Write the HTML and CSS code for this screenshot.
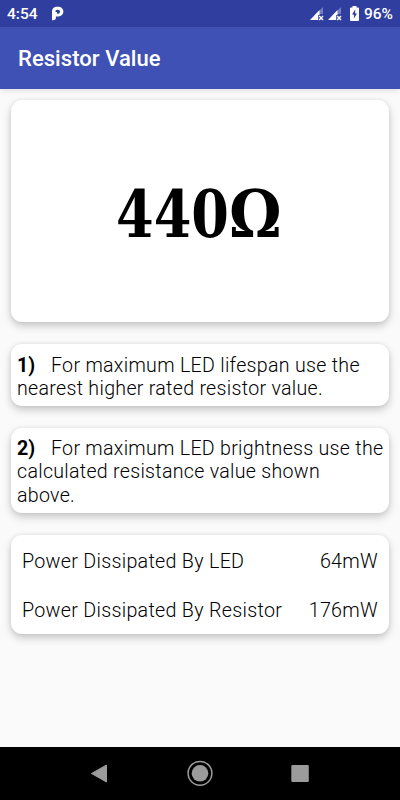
FILE: index.html
```html
<!DOCTYPE html>
<html lang="en">
<head>
<meta charset="utf-8">
<title>Resistor Value</title>
<link rel="stylesheet" href="styles.css">
</head>
<body>
<div class="status">
  <span class="clock">4:54</span>
  <svg class="app-icon" width="13" height="15" viewBox="0 0 13 15"><path fill="#fff" fill-rule="evenodd" d="M1 14.200V5.500A4.800 4.800 0 0 1 5.800.700H7.500a4.600 4.600 0 0 1 0 9.800H4.900v1a2.700 2.700 0 0 1-2.700 2.700zM4.900 7.700H7a2 2 0 0 0 0-4H6a1.500 1.500 0 0 0-1.500 1.500v.8H6v1.700z"/></svg>
  <div class="indicators">
    <svg class="signal" width="14" height="14" viewBox="0 0 14 14"><path fill="#7480c4" d="M9 4l4-4v7H9z"/><path fill="#fff" d="M0 13L9.500 3v10z"/><path fill="#303f9f" d="M8.200 8H14v6H8.200z"/><path stroke="#fff" stroke-width="1.400" d="M9.200 9l3.800 4m0-4l-3.800 4"/></svg>
    <svg class="signal second" width="14" height="14" viewBox="0 0 14 14"><path fill="#7480c4" d="M9 4l4-4v7H9z"/><path fill="#fff" d="M0 13L9.500 3v10z"/><path fill="#303f9f" d="M8.200 8H14v6H8.200z"/><path stroke="#fff" stroke-width="1.400" d="M9.200 9l3.800 4m0-4l-3.800 4"/></svg>
    <svg class="battery" width="9" height="15" viewBox="0 0 9 15"><path fill="#fff" d="M2.500 0h4v1.500H8a1 1 0 0 1 1 1V14a1 1 0 0 1-1 1H1a1 1 0 0 1-1-1V2.500a1 1 0 0 1 1-1h1.500z"/><path fill="#303f9f" d="M5.200 3.500v4H7L3.900 12.500v-4H2z"/></svg>
    <span>96%</span>
  </div>
</div>
<header class="appbar"><h1>Resistor Value</h1></header>
<main>
  <section class="card result"><div class="value"><span class="digits">440</span><span class="ohm">Ω</span></div></section>
  <section class="card note"><b>1)</b>For maximum LED lifespan use the nearest higher rated resistor value.</section>
  <section class="card note second"><b>2)</b>For maximum LED brightness use the calculated resistance value shown<br>above.</section>
  <section class="card power">
    <div class="row"><span>Power Dissipated By LED</span><span>64mW</span></div>
    <div class="row"><span>Power Dissipated By Resistor</span><span>176mW</span></div>
  </section>
</main>
<nav class="navbar">
  <svg width="26" height="26" viewBox="0 0 26 26"><path fill="#9b9b9b" stroke="#9b9b9b" stroke-linejoin="round" d="M4.500 13.500L19.500 5v17z"/></svg>
  <svg width="26" height="26" viewBox="0 0 26 26"><circle cx="13" cy="13.300" r="11.900" fill="none" stroke="#9b9b9b" stroke-width="1.500"/><circle cx="13" cy="13.300" r="8.300" fill="#9b9b9b"/></svg>
  <svg width="26" height="26" viewBox="0 0 26 26"><rect x="4.300" y="5" width="17.500" height="17" rx="1" fill="#9b9b9b"/></svg>
</nav>
</body>
</html>
```
FILE: styles.css
```css
* { box-sizing: border-box; }
body {
  margin: 0;
  height: 800px;
  display: flex;
  flex-direction: column;
  background: #fafafa;
  color: #000;
  font-family: Roboto, sans-serif;
  overflow: hidden;
}
.status {
  height: 27px;
  flex: none;
  display: flex;
  align-items: center;
  padding: 0 7px 0 7px;
  background: #303f9f;
  color: #fff;
  font-size: 15.5px;
  font-weight: 500;
  line-height: 28px;
}
.clock { width: 44px; }
.indicators { margin-left: auto; display: flex; align-items: center; }
.signal.second { margin-left: 4px; }
.battery { margin: 0 5px 0 8px; }
.appbar {
  height: 62px;
  flex: none;
  padding-left: 18px;
  background: #3f51b5;
  color: #fff;
  box-shadow: 0 2px 5px rgba(0, 0, 0, 0.1);
}
.appbar h1 { margin: 0; font-size: 22px; font-weight: 500; line-height: 64px; letter-spacing: 0.05px; }
main {
  flex: 1;
  padding: 11px 11px 0;
  display: flex;
  flex-direction: column;
}
.card {
  flex: none;
  background: #fff;
  border-radius: 11px;
  box-shadow: 0 4px 8px rgba(0, 0, 0, 0.2), 0 0 4px rgba(0, 0, 0, 0.08);
}
.result {
  height: 222px;
  margin-bottom: 22px;
  display: flex;
  align-items: center;
  justify-content: center;
}
.value {
  display: flex;
  width: 168px;
  padding-top: 5px;
  font: bold 65px/80px "DejaVu Serif Condensed", "DejaVu Serif", serif;
  font-stretch: condensed;
}
.digits { width: 113px; transform: scaleX(0.925); transform-origin: left; }
.ohm { transform: scaleX(1.01); transform-origin: left; }
.note {
  height: 62px;
  margin-bottom: 22px;
  padding: 10px 3px 0 6px;
  font-size: 19.6px;
  font-weight: 300;
  line-height: 23.3px;
  letter-spacing: 0.3px;
}
.note.second { height: 85px; padding-top: 9px; letter-spacing: 0.29px; }
.note b { display: inline-block; width: 34px; font-weight: 700; letter-spacing: 0; }
.power { height: 99px; padding: 2px 11px 0; }
.row {
  display: flex;
  justify-content: space-between;
  font-size: 19.7px;
  font-weight: 300;
  line-height: 49px;
  letter-spacing: 0.29px;
}
.navbar {
  height: 53px;
  flex: none;
  display: flex;
  justify-content: space-between;
  align-items: center;
  padding: 0 87px 2px;
  background: #000;
}
```
